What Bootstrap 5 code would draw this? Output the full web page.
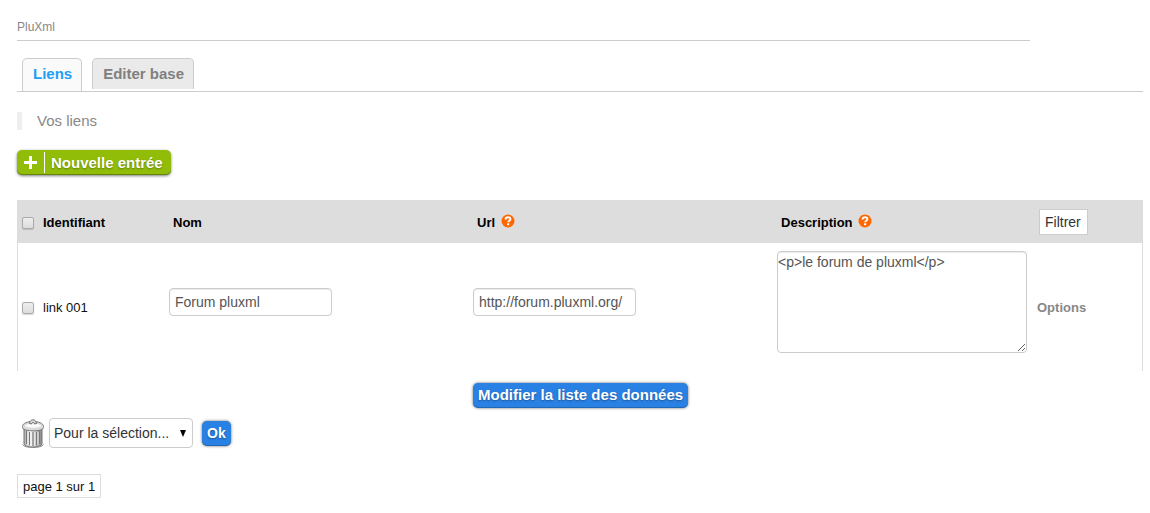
<!DOCTYPE html>
<html lang="fr">
<head>
<meta charset="utf-8">
<meta name="viewport" content="width=device-width, initial-scale=1">
<title>PluXml - Liens</title>
<link href="https://cdn.jsdelivr.net/npm/bootstrap@5.3.0/dist/css/bootstrap.min.css" rel="stylesheet">
<style>
  body { font: 13px/16px "Liberation Sans", Arial, sans-serif; color: #111; padding: 18px 7px 14px 17px; background: #fff; }
  .site-name { width: 90%; font-size: 12px; font-weight: 400; line-height: 18px; color: #888; border-bottom: 1px solid #ccc; padding-bottom: 4px; margin: 0 0 17px; }
  .nav-tabs { --bs-nav-tabs-border-color: #ccc; height: 34px; padding-left: 5px; gap: 10px; align-items: flex-start; margin-bottom: 20px; }
  .nav-tabs .nav-link { font-size: 15px; font-weight: 700; line-height: 20px; color: #808080; background: #eaeaea; border: 1px solid #ccc; border-bottom: 0; border-radius: 5px 5px 0 0; padding: 5px 9px 5px 10px; margin: 0; }
  .nav-tabs .nav-link.active { color: #1c9ff5; background: #fafafa; border: 1px solid #ccc; border-bottom: 0; padding-bottom: 7px; }
  .intro { font-size: 15px; line-height: 18px; color: #888; border-left: 5px solid #eee; padding-left: 15px; margin: 0 0 20px; }
  .btn-px { font-size: 15px; font-weight: 700; line-height: 17px; color: #fff; border: 0; border-radius: 5px; padding: 3px 5px 5px; text-shadow: 0 1px 2px rgba(0,0,0,.35); box-shadow: 0 0 3px rgba(0,0,0,.6), inset 0 -1px 0 rgba(0,0,0,.2); }
  .btn-green, .btn-green:hover { background: #91bd09; color: #fff; padding: 0 8px 0 7px; height: 25px; box-shadow: 0 1px 3px rgba(0,0,0,.5), inset 0 -1px 0 rgba(0,0,0,.3); }
  .btn-green .rule { width: 1px; height: 21px; background: #fff; margin: 0 6px 0 7px; }
  .btn-blue, .btn-blue:hover { background: #2981e4; color: #fff; }
  .btn-ok { font-size: 14px; padding: 4px 5px; }
  .links-table { table-layout: fixed; width: 100%; margin: 25px 0 10px; border-collapse: separate; border-spacing: 0; }
  .links-table .c-check { width: 22px; }
  .links-table .c-id { width: 130px; }
  .links-table .c-wide { width: 27%; }
  .links-table .c-desc { width: 23%; }
  .links-table th { height: 43px; background: #ddd; color: #000; padding: 2px 4px 0; }
  .links-table th:last-child { padding: 0 4px; }
  .links-table td { padding: 8px 0; }
  .links-table th.pick { padding: 3px 0 0 5px; }
  .links-table tbody td.pick { border-left: 1px solid #ddd; padding: 2px 0 0 4px; }
  .links-table tbody td.caption-cell { padding-top: 10px; }
  .links-table tbody td:last-child { border-right: 1px solid #ddd; }
  .links-table tfoot td { padding: 12px 0 0; }
  .tick { appearance: none; display: block; width: 12px; height: 12px; margin: 0; border: 1px solid #aaa; border-radius: 2px; background: linear-gradient(#eee, #ddd); box-shadow: 0 1px 1px rgba(0,0,0,.15); }
  .tick:checked { background: #666; }
  .field { display: block; font-size: 14px; line-height: 16px; color: #555; background: #fff; border: 1px solid #ccc; border-radius: 4px; box-shadow: inset 0 1px 1px rgba(0,0,0,.08); margin: 0 0 10px; padding: 5px; width: 163px; height: 28px; }
  textarea.field { width: 250px; height: 102px; padding: 2px 0 0; resize: both; }
  .btn-filter { font-size: 14px; line-height: 16px; color: #333; background: #fff; border: 1px solid #ccc; border-radius: 0; padding: 4px 6px 4px 5px; margin-left: -1px; }
  .options-link { color: #888; font-weight: 700; text-decoration: none; padding-left: 1px; }
  .bulk { width: 144px; height: 30px; font-size: 14px; line-height: 18px; color: #333; border: 1px solid #ccc; border-radius: 4px; padding: 5px 4px; margin: 0 9px 0 4px; appearance: none; background: #fff url("data:image/svg+xml,%3Csvg xmlns='http://www.w3.org/2000/svg' width='6' height='7'%3E%3Cpath d='M0 0h6L3 7z'/%3E%3C/svg%3E") no-repeat right 6px center; }
  .pager { display: inline-block; border: 1px solid #ddd; padding: 4px 5px 2px; line-height: 16px; margin-top: 26px; }
  .help { vertical-align: -1px; margin-left: 2px; }
</style>
</head>
<body>
<h1 class="site-name">PluXml</h1>
<nav class="nav nav-tabs">
  <a class="nav-link active" href="#">Liens</a>
  <a class="nav-link" href="#">Editer base</a>
</nav>
<p class="intro">Vos liens</p>
<button type="button" class="btn btn-px btn-green d-flex align-items-center">
  <svg width="13" height="13" viewBox="0 0 13 13" aria-hidden="true"><path d="M5 0h3v5h5v3H8v5H5V8H0V5h5z" fill="#fff"/></svg>
  <span class="rule"></span>Nouvelle entrée
</button>
<form>
  <table class="links-table align-middle">
    <colgroup><col class="c-check"><col class="c-id"><col class="c-wide"><col class="c-wide"><col class="c-desc"><col></colgroup>
    <thead>
      <tr>
        <th class="pick"><input class="tick" type="checkbox" aria-label="Tout sélectionner"></th>
        <th>Identifiant</th>
        <th>Nom</th>
        <th>Url
          <svg class="help" width="14" height="14" viewBox="0 0 14 14" aria-hidden="true"><circle cx="7" cy="7" r="6.5" fill="#f60"/><path d="M4.6 5.400c0-1.400 1-2.100 2.400-2.100s2.400.8 2.400 2c0 1.500-2.200 1.400-2.200 2.900" fill="none" stroke="#fff" stroke-width="2"/><path d="M6.100 9.300h2.100v1.900H6.100z" fill="#fff"/></svg></th>
        <th>Description
          <svg class="help" width="14" height="14" viewBox="0 0 14 14" aria-hidden="true"><circle cx="7" cy="7" r="6.5" fill="#f60"/><path d="M4.6 5.400c0-1.400 1-2.100 2.400-2.100s2.400.8 2.400 2c0 1.500-2.200 1.400-2.200 2.900" fill="none" stroke="#fff" stroke-width="2"/><path d="M6.100 9.300h2.100v1.900H6.100z" fill="#fff"/></svg></th>
        <th><button type="button" class="btn btn-filter">Filtrer</button></th>
      </tr>
    </thead>
    <tbody>
      <tr>
        <td class="pick"><input class="tick" type="checkbox" id="link001"></td>
        <td class="caption-cell"><label class="ps-1" for="link001">link 001</label></td>
        <td><input class="field" type="text" value="Forum pluxml" aria-label="Nom"></td>
        <td><input class="field" type="text" value="http://forum.pluxml.org/" aria-label="Url"></td>
        <td><textarea class="field" aria-label="Description">&lt;p&gt;le forum de pluxml&lt;/p&gt;</textarea></td>
        <td class="caption-cell"><a class="options-link" href="#">Options</a></td>
      </tr>
    </tbody>
    <tfoot>
      <tr><td colspan="3"></td><td colspan="3"><button type="button" class="btn btn-px btn-blue">Modifier la liste des données</button></td></tr>
    </tfoot>
  </table>
  <div class="d-flex align-items-center">
    <svg class="ms-1" width="24" height="30" viewBox="0 0 24 30" aria-hidden="true">
      <defs><linearGradient id="can"><stop offset="0" stop-color="#aaa"/><stop offset=".35" stop-color="#fff"/><stop offset="1" stop-color="#888"/></linearGradient></defs>
      <path d="M3 9v17c1 4 17 4 18 0V9z" fill="url(#can)" stroke="#777"/>
      <path d="M5.500 13v13M8.500 14v13.500M12 14v14M15.500 14v13.500M18.500 13v13" stroke="#777" stroke-width="1.200"/>
      <path d="M7 13.500v13M10.300 14v14M13.800 14v14M17 14v12.500" stroke="#eee"/>
      <path d="M1.500 26.500c2 4 19 4 21 0" fill="none" stroke="#888"/>
      <path d="M1.500 8.500C1.500 5 7 3.500 12 3.500S22.500 5 22.500 8.500v1C22.500 14 1.500 14 1.500 9.500z" fill="#ddd" stroke="#777"/>
      <path d="M3 8c2-4 16-4 18 0-2 3-16 3-18 0z" fill="#fafafa" stroke="#ccc" stroke-width=".7"/>
      <path d="M8.500 5.500C9 .5 15 .5 15.500 5.500l-2 .5c0-2-3-2-3 0z" fill="#ddd" stroke="#555" stroke-width=".8"/>
    </svg>
    <select class="bulk" aria-label="Pour la sélection"><option>Pour la sélection...</option></select>
    <button type="button" class="btn btn-px btn-blue btn-ok">Ok</button>
  </div>
</form>
<div><span class="pager">page 1 sur 1</span></div>
<script src="https://cdn.jsdelivr.net/npm/bootstrap@5.3.0/dist/js/bootstrap.bundle.min.js"></script>
</body>
</html>
